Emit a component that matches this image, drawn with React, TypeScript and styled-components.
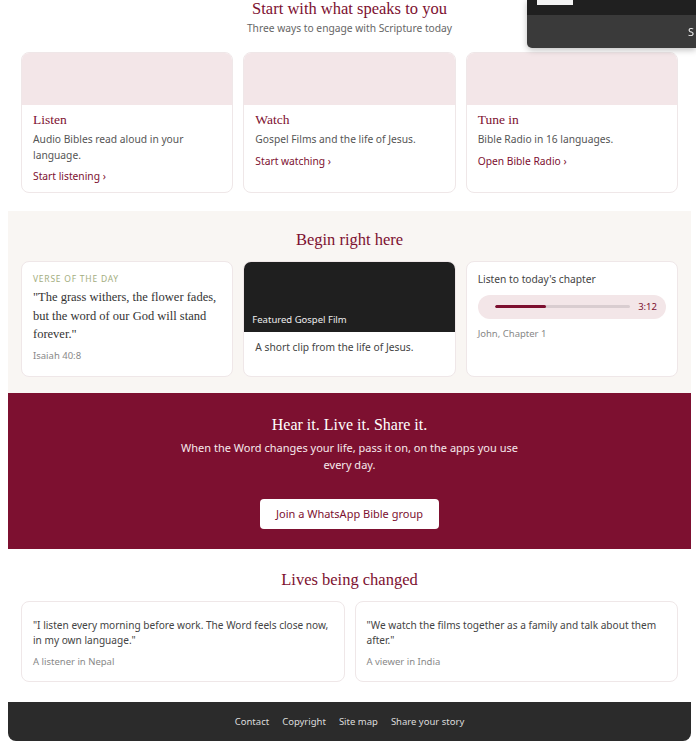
import styled, { createGlobalStyle } from 'styled-components';

const crimson = '#7d1030';
const blush = '#f3e6e8';

const GlobalStyle = createGlobalStyle`
  html, body {
    margin: 0;
    padding: 0;
    background: #fff;
  }
  body {
    font-family: 'Noto Sans', 'Open Sans', sans-serif;
    color: #444;
  }
  * {
    box-sizing: border-box;
  }
`;

const Page = styled.div`
  width: 683px;
  margin: 0 0 0 8px;
  padding-bottom: 10px;
`;

const Section = styled.section<{ tone?: 'plain' | 'sand' | 'wine' }>`
  padding: ${(p) => (p.tone === 'wine' ? '22px 13px 20px' : '0 13px 18px')};
  background: ${(p) =>
    p.tone === 'sand' ? '#f9f6f3' : p.tone === 'wine' ? crimson : 'transparent'};
  text-align: center;
`;

const Heading = styled.h2<{ light?: boolean }>`
  margin: 0;
  font-family: 'Liberation Serif', 'Times New Roman', serif;
  font-weight: 400;
  font-size: ${(p) => (p.light ? '16px' : '16.5px')};
  line-height: 20px;
  color: ${(p) => (p.light ? '#fff' : crimson)};
`;

const PageTitle = styled(Heading)`
  line-height: 17px;
`;

const Subtitle = styled.p`
  margin: 4px 0 0;
  font-size: 10.25px;
  line-height: 15px;
  color: #666;
`;

const Grid = styled.div<{ cols: number }>`
  display: grid;
  grid-template-columns: repeat(${(p) => p.cols}, 1fr);
  gap: 10px;
  text-align: left;
`;

const Card = styled.div`
  background: #fff;
  border: 1px solid #efe7e8;
  border-radius: 8px;
  overflow: hidden;
  display: flex;
  flex-direction: column;
`;

const Banner = styled.div`
  height: 52px;
  background: ${blush};
`;

const CardBody = styled.div<{ compact?: boolean }>`
  padding: ${(p) => (p.compact ? '10px 11px 13px' : '6px 11px 7px')};
`;

const CardTitle = styled.h3`
  margin: 0 0 3px;
  font-family: 'Liberation Serif', 'Times New Roman', serif;
  font-weight: 400;
  font-size: 13.5px;
  line-height: 18px;
  color: ${crimson};
`;

const Text = styled.p<{ dark?: boolean }>`
  margin: 0;
  font-size: 10.25px;
  line-height: 15.5px;
  color: ${(p) => (p.dark ? '#444' : '#555')};
`;

const MoreLink = styled.a`
  display: inline-block;
  margin-top: 6px;
  font-size: 10.25px;
  line-height: 15px;
  color: ${crimson};
  text-decoration: none;
`;

const Eyebrow = styled.div`
  font-size: 8.5px;
  letter-spacing: 0.09em;
  text-transform: uppercase;
  color: #a3ad80;
  line-height: 12px;
  margin: 1px 0 3px;
`;

const Verse = styled.blockquote`
  margin: 0;
  font-family: 'Liberation Serif', 'Times New Roman', serif;
  font-size: 12.5px;
  line-height: 18.5px;
  color: #333;
`;

const Meta = styled.div`
  margin-top: 5px;
  font-size: 9.5px;
  line-height: 14px;
  color: #888;
`;

const Film = styled.div`
  height: 70px;
  background: #1f1f1f;
  display: flex;
  align-items: flex-end;
  padding: 0 8px 6px;
  color: #eee;
  font-size: 9.5px;
  line-height: 12px;
`;

const Player = styled.div`
  margin: 7px 0 8px;
  height: 24px;
  border-radius: 12px;
  background: ${blush};
  display: flex;
  align-items: center;
  gap: 8px;
  padding: 0 9px 0 17px;
`;

const Track = styled.div`
  flex: 1;
  height: 3px;
  border-radius: 2px;
  background: #d9cdd0;
  overflow: hidden;
`;

const Progress = styled.div`
  height: 100%;
  border-radius: 2px;
  background: ${crimson};
`;

const Time = styled.span`
  font-size: 9.5px;
  color: ${crimson};
`;

const Lead = styled.p`
  margin: 4px auto 0;
  max-width: 360px;
  font-size: 11px;
  line-height: 17px;
  color: #f6e9ec;
`;

const CtaButton = styled.a`
  display: inline-block;
  margin-top: 26px;
  padding: 0 16px;
  height: 30px;
  line-height: 30px;
  border-radius: 4px;
  background: #fff;
  color: ${crimson};
  font-size: 11px;
  text-decoration: none;
`;

const Story = styled(Card)`
  padding: 16px 6px 12px 11px;
`;

const StoryQuote = styled(Text)`
  font-size: 10.1px;
`;

const Footer = styled.footer`
  margin-top: 20px;
  height: 39px;
  background: #2b2b2b;
  border-radius: 0 0 8px 8px;
  display: flex;
  justify-content: center;
  align-items: center;
  gap: 13px;
`;

const FooterLink = styled.a`
  font-size: 9.5px;
  color: #ddd;
  text-decoration: none;
`;

const Notice = styled.div`
  position: fixed;
  top: 0;
  right: 0;
  width: 169px;
  height: 48px;
  border-bottom-left-radius: 5px;
  overflow: hidden;
  background: #3a3a3a;
  box-shadow: 0 2px 6px rgba(0, 0, 0, 0.25);
  display: flex;
  flex-direction: column;
`;

const NoticeBar = styled.div`
  height: 15px;
  background: #202020;
  padding-left: 10px;
`;

const NoticeThumb = styled.div`
  width: 36px;
  height: 5px;
  background: #f4f4f4;
`;

const NoticeText = styled.div`
  flex: 1;
  display: flex;
  align-items: center;
  padding-left: 161px;
  white-space: nowrap;
  font-size: 11px;
  color: #eee;
`;

const ways = [
  { title: 'Listen', text: 'Audio Bibles read aloud in your language.', link: 'Start listening' },
  { title: 'Watch', text: 'Gospel Films and the life of Jesus.', link: 'Start watching' },
  { title: 'Tune in', text: 'Bible Radio in 16 languages.', link: 'Open Bible Radio' },
];

const stories = [
  {
    quote: '"I listen every morning before work. The Word feels close now, in my own language."',
    who: 'A listener in Nepal',
  },
  {
    quote: '"We watch the films together as a family and talk about them after."',
    who: 'A viewer in India',
  },
];

const footerLinks = ['Contact', 'Copyright', 'Site map', 'Share your story'];

export default function App() {
  const played = 38;

  return (
    <>
      <GlobalStyle />
      <Page>
        <Section>
          <PageTitle>Start with what speaks to you</PageTitle>
          <Subtitle>Three ways to engage with Scripture today</Subtitle>
          <Grid cols={3} style={{ marginTop: 16 }}>
            {ways.map((w) => (
              <Card key={w.title}>
                <Banner />
                <CardBody>
                  <CardTitle>{w.title}</CardTitle>
                  <Text>{w.text}</Text>
                  <MoreLink href="#">{w.link} ›</MoreLink>
                </CardBody>
              </Card>
            ))}
          </Grid>
        </Section>

        <Section tone="sand" style={{ paddingTop: 19, paddingBottom: 16 }}>
          <Heading>Begin right here</Heading>
          <Grid cols={3} style={{ marginTop: 11 }}>
            <Card>
              <CardBody compact>
                <Eyebrow>Verse of the day</Eyebrow>
                <Verse>
                  "The grass withers, the flower fades, but the word of our God will stand forever."
                </Verse>
                <Meta>Isaiah 40:8</Meta>
              </CardBody>
            </Card>
            <Card>
              <Film>Featured Gospel Film</Film>
              <CardBody compact style={{ paddingTop: 8 }}>
                <Text dark>A short clip from the life of Jesus.</Text>
              </CardBody>
            </Card>
            <Card>
              <CardBody compact>
                <Text dark>Listen to today's chapter</Text>
                <Player>
                  <Track>
                    <Progress style={{ width: `${played}%` }} />
                  </Track>
                  <Time>3:12</Time>
                </Player>
                <Meta style={{ marginTop: 0 }}>John, Chapter 1</Meta>
              </CardBody>
            </Card>
          </Grid>
        </Section>

        <Section tone="wine">
          <Heading light>Hear it. Live it. Share it.</Heading>
          <Lead>When the Word changes your life, pass it on, on the apps you use every day.</Lead>
          <CtaButton href="#">Join a WhatsApp Bible group</CtaButton>
        </Section>

        <Section style={{ paddingTop: 21, paddingBottom: 0 }}>
          <Heading>Lives being changed</Heading>
          <Grid cols={2} style={{ marginTop: 11 }}>
            {stories.map((s) => (
              <Story key={s.who}>
                <StoryQuote dark>{s.quote}</StoryQuote>
                <Meta style={{ marginTop: 6 }}>{s.who}</Meta>
              </Story>
            ))}
          </Grid>
        </Section>

        <Footer>
          {footerLinks.map((l) => (
            <FooterLink key={l} href="#">
              {l}
            </FooterLink>
          ))}
        </Footer>
      </Page>

      <Notice>
        <NoticeBar>
          <NoticeThumb />
        </NoticeBar>
        <NoticeText>S</NoticeText>
      </Notice>
    </>
  );
}
